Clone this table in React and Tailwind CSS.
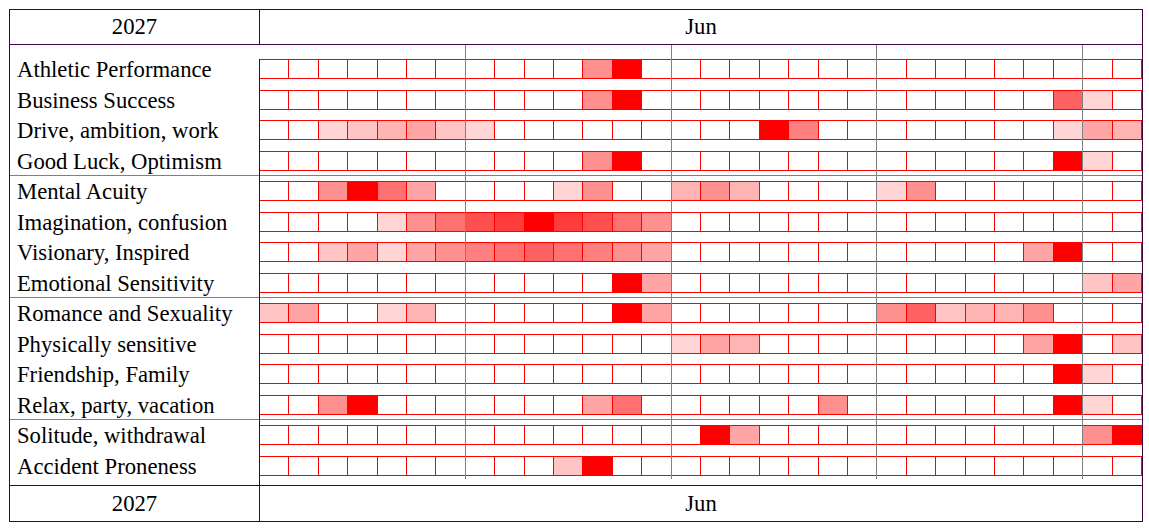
const SHADES = {
  a: 'bg-[#ffd5d5]',
  b: 'bg-[#ffc4c4]',
  c: 'bg-[#ffb4b4]',
  d: 'bg-[#ffa5a5]',
  e: 'bg-[#ff9090]',
  f: 'bg-[#ff8080]',
  g: 'bg-[#ff7070]',
  h: 'bg-[#ff6262]',
  i: 'bg-[#ff5050]',
  j: 'bg-[#ff3c3c]',
  R: 'bg-[#ff0000]',
};

// day -> shade key, days 1..30 of June
const ROWS = [
  { label: 'Athletic Performance', marks: { 12: 'e', 13: 'R' } },
  { label: 'Business Success', marks: { 12: 'e', 13: 'R', 28: 'h', 29: 'a' } },
  { label: 'Drive, ambition, work', marks: { 3: 'a', 4: 'b', 5: 'c', 6: 'd', 7: 'b', 8: 'a', 18: 'R', 19: 'f', 28: 'a', 29: 'd', 30: 'c' } },
  { label: 'Good Luck, Optimism', marks: { 12: 'e', 13: 'R', 28: 'R', 29: 'a' }, sep: true },
  { label: 'Mental Acuity', marks: { 3: 'e', 4: 'R', 5: 'g', 6: 'd', 11: 'a', 12: 'e', 15: 'c', 16: 'e', 17: 'c', 22: 'a', 23: 'e' } },
  { label: 'Imagination, confusion', marks: { 5: 'a', 6: 'e', 7: 'g', 8: 'i', 9: 'j', 10: 'R', 11: 'j', 12: 'i', 13: 'g', 14: 'e' } },
  { label: 'Visionary, Inspired', marks: { 3: 'b', 4: 'd', 5: 'a', 6: 'd', 7: 'e', 8: 'f', 9: 'g', 10: 'h', 11: 'g', 12: 'f', 13: 'e', 14: 'd', 27: 'd', 28: 'R' } },
  { label: 'Emotional Sensitivity', marks: { 13: 'R', 14: 'd', 29: 'b', 30: 'd' }, sep: true },
  { label: 'Romance and Sexuality', marks: { 1: 'b', 2: 'd', 5: 'a', 6: 'c', 13: 'R', 14: 'd', 22: 'e', 23: 'h', 24: 'b', 25: 'c', 26: 'c', 27: 'e' } },
  { label: 'Physically sensitive', marks: { 15: 'a', 16: 'd', 17: 'c', 27: 'd', 28: 'R', 30: 'b' } },
  { label: 'Friendship, Family', marks: { 28: 'R', 29: 'a' } },
  { label: 'Relax, party, vacation', marks: { 3: 'e', 4: 'R', 12: 'd', 13: 'g', 20: 'e', 28: 'R', 29: 'a' }, sep: true },
  { label: 'Solitude, withdrawal', marks: { 16: 'R', 17: 'd', 29: 'e', 30: 'R' } },
  { label: 'Accident Proneness', marks: { 11: 'b', 12: 'R' } },
];

const DAYS = Array.from({ length: 30 }, (_, i) => i + 1);

function Gap({ sep }) {
  return (
    <div className="flex-1 flex items-center">
      {sep && <div className="h-px w-full bg-[#808080]" />}
    </div>
  );
}

function ChartRow({ row }) {
  return (
    <div className="flex h-[30.5px]">
      <div className="w-[250px] shrink-0 border-r border-[#3f0040] flex flex-col">
        <div className="h-[20px] leading-[22px] pl-[7px] whitespace-nowrap">{row.label}</div>
        <Gap sep={row.sep} />
      </div>
      <div className="flex-1 flex flex-col">
        <div className="h-[20px] border-y border-[#ff0000] grid grid-cols-[repeat(30,minmax(0,1fr))]">
          {DAYS.map((d) => (
            <div key={d} className={`border-r border-[#ff0000] ${SHADES[row.marks[d]] || 'bg-white'}`} />
          ))}
        </div>
        <Gap sep={row.sep} />
      </div>
    </div>
  );
}

function HeadRow({ className }) {
  return (
    <div className={`flex ${className}`}>
      <div className="w-[250px] shrink-0 border-r border-[#3f0040] text-center">2027</div>
      <div className="flex-1 text-center">Jun</div>
    </div>
  );
}

export default function App() {
  return (
    <div className="w-[1149px] h-[532px] bg-white pt-[9px] pl-[9px] text-black font-['Liberation_Serif',serif] text-[22.7px]">
      <div className="w-[1134px] border border-[#3f0040]">
        <HeadRow className="h-[35px] leading-[34px] border-b border-[#3f0040]" />

        <div className="relative h-[441px] pt-[14px] border-b border-[#3f0040]">
          {ROWS.map((row) => (
            <ChartRow key={row.label} row={row} />
          ))}
          {/* week dividers drawn over the day cells */}
          <div className="pointer-events-none absolute top-0 bottom-[6px] left-[250px] right-0 grid grid-cols-[repeat(30,minmax(0,1fr))]">
            {DAYS.map((d) => (
              <div key={d} className={d % 7 === 0 ? 'border-r border-[#808080]' : ''} />
            ))}
          </div>
        </div>

        <HeadRow className="h-[35px] leading-[35px]" />
      </div>
    </div>
  );
}
